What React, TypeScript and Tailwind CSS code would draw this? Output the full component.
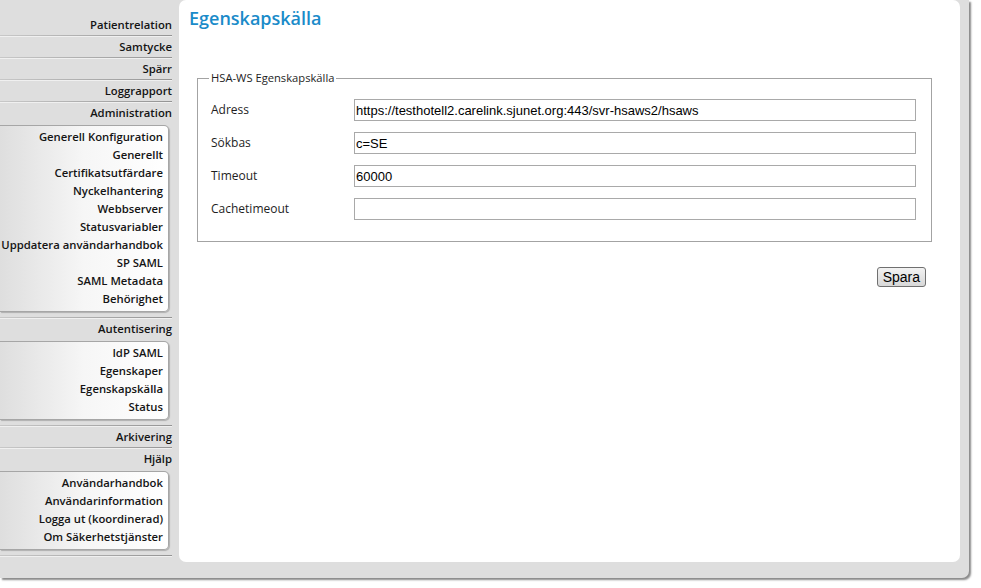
import React from "react";

type Group = { label: string; sub?: string[] };

const groups: Group[] = [
  { label: "Patientrelation" },
  { label: "Samtycke" },
  { label: "Spärr" },
  { label: "Loggrapport" },
  {
    label: "Administration",
    sub: [
      "Generell Konfiguration",
      "Generellt",
      "Certifikatsutfärdare",
      "Nyckelhantering",
      "Webbserver",
      "Statusvariabler",
      "Uppdatera användarhandbok",
      "SP SAML",
      "SAML Metadata",
      "Behörighet",
    ],
  },
  { label: "Autentisering", sub: ["IdP SAML", "Egenskaper", "Egenskapskälla", "Status"] },
  { label: "Arkivering" },
  {
    label: "Hjälp",
    sub: ["Användarhandbok", "Användarinformation", "Logga ut (koordinerad)", "Om Säkerhetstjänster"],
  },
];

const fields: { label: string; value: string }[] = [
  { label: "Adress", value: "https://testhotell2.carelink.sjunet.org:443/svr-hsaws2/hsaws" },
  { label: "Sökbas", value: "c=SE" },
  { label: "Timeout", value: "60000" },
  { label: "Cachetimeout", value: "" },
];

function Separator() {
  return <div className="mr-[7px] h-px bg-gradient-to-r from-[#c8c8c8] to-[#949494] shadow-[0_1px_0_#f0f0f0]" />;
}

export default function App() {
  return (
    <div className="w-[981px] h-[588px] bg-white overflow-hidden font-['Open_Sans',sans-serif]">
      <div className="w-[969px] h-[578px] bg-[#dedede] rounded-br-[7px] shadow-[2px_2px_2px_#8a8a8a] flex">
        <nav className="w-[179px] shrink-0 pt-[14px] text-[11.3px] font-semibold text-[#141414]">
          {groups.map((g) => (
            <div key={g.label}>
              <div className="h-[21px] flex items-center justify-end pr-[7px] leading-none whitespace-nowrap">{g.label}</div>
              {g.sub && (
                <div className="mt-[2px] mb-[5px] mr-[10px] pt-[2px] pb-[3px] pr-[5px] rounded-r-[5px] border-t border-r border-b border-[#a6a6a6] bg-gradient-to-r from-[#dedede] via-[#f6f6f6] to-white shadow-[1px_1px_1px_#b0b0b0]">
                  {g.sub.map((s) => (
                    <div key={s} className="h-[18px] flex items-center justify-end leading-none whitespace-nowrap">
                      {s}
                    </div>
                  ))}
                </div>
              )}
              <Separator />
            </div>
          ))}
        </nav>
        <main className="flex-1 mr-[9px] mb-[16px] bg-white rounded-[7px] pl-[10px] pt-[5px]">
          <h1 className="text-[18px] font-semibold text-[#1a8bc9] leading-[26px]">Egenskapskälla</h1>
          <fieldset className="mt-[40px] ml-[8px] mr-[28px] border border-[#a3a3a3] pl-[13px] pr-[15px] pt-[14px] pb-[21px]">
            <legend className="ml-[-2px] px-[2px] text-[11.2px] text-[#1e1e1e] leading-[14px]">HSA-WS Egenskapskälla</legend>
            <div className="flex flex-col gap-[11px]">
              {fields.map((f) => (
                <div key={f.label} className="flex items-center">
                  <label className="w-[143px] shrink-0 text-[12px] text-[#1e1e1e]">{f.label}</label>
                  <input
                    readOnly
                    value={f.value}
                    className="flex-1 h-[22px] border border-[#a9a9a9] px-[1px] font-['Liberation_Sans',sans-serif] text-[13px] text-black outline-none"
                  />
                </div>
              ))}
            </div>
          </fieldset>
          <div className="flex justify-end mr-[34px] mt-[25px]">
            <button className="h-[20px] px-[5px] rounded-[3px] border border-[#707070] bg-gradient-to-b from-[#f2f2f2] to-[#d8d8d8] font-['Liberation_Sans',sans-serif] text-[14px] text-black leading-none">
              Spara
            </button>
          </div>
        </main>
      </div>
    </div>
  );
}
